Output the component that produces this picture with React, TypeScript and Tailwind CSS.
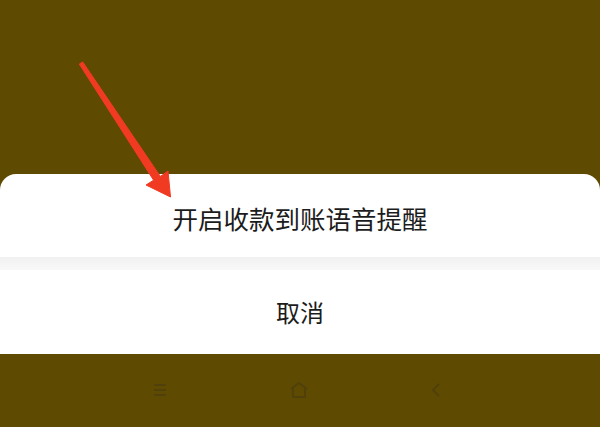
import React from "react";

export default function App() {
  const font = { fontFamily: '"Noto Sans CJK SC", "Noto Sans", sans-serif' };
  return (
    <div className="relative w-[600px] h-[427px] bg-[#5f4a01] overflow-hidden flex flex-col" style={font}>
      <div className="h-[174px] shrink-0" />
      <div className="bg-white rounded-t-[16px] flex flex-col shrink-0">
        <div className="h-[83px] flex items-center justify-center text-[25.5px] text-[#1c1c1c] leading-none pt-[5px]">
          开启收款到账语音提醒
        </div>
        <div className="h-[13px] bg-gradient-to-b from-[#f1f1f1] to-[#f8f8f8]" />
        <div className="h-[84px] flex items-center justify-center text-[24px] text-[#1c1c1c] leading-none">
          取消
        </div>
      </div>
      <div className="flex-1 flex items-center justify-center gap-[120px] pr-[6px] pb-[2px]">
        <svg width="18" height="18" viewBox="0 0 18 18" className="text-[#50400a]">
          <path d="M3 4h12M3 9h12M3 14h12" stroke="currentColor" strokeWidth="2" fill="none" />
        </svg>
        <svg width="20" height="20" viewBox="0 0 20 20" className="text-[#50400a]">
          <path d="M4 8v9h12V8M2 9l8-6 8 6" stroke="currentColor" strokeWidth="2" fill="none" />
        </svg>
        <svg width="14" height="18" viewBox="0 0 14 18" className="text-[#50400a]">
          <path d="M10 3l-6 6 6 6" stroke="currentColor" strokeWidth="2" fill="none" />
        </svg>
      </div>
      <svg className="absolute left-0 top-0 pointer-events-none" width="600" height="427" viewBox="0 0 600 427">
        <polygon
          points="79.3,64.1 82.7,61.9 160.4,176.4 168,171 170.5,197 146,185 153.6,180.2"
          fill="#f13a22"
          strokeLinejoin="round"
          stroke="#f13a22"
          strokeWidth="1"
        />
      </svg>
    </div>
  );
}
